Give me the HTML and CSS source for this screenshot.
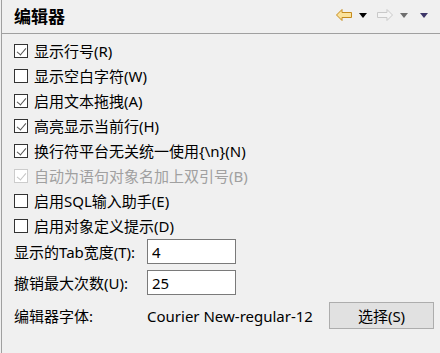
FILE: index.html
```html
<!DOCTYPE html>
<html lang="zh-CN">
<head>
  <meta charset="UTF-8" />
  <title>编辑器</title>
  <link rel="stylesheet" href="styles.css">
</head>
<body>
  <div class="panel">
    <div class="header">
      <h1>编辑器</h1>
      <div class="nav">
        <svg class="arrow" width="16" height="12" viewBox="0 0 16 12">
          <path d="M0.5 6 L6 0.5 L6 3.5 L15.5 3.5 L15.5 8.5 L6 8.5 L6 11.5 Z" fill="#fbe29a" stroke="#c48a1c" stroke-width="1"/>
        </svg>
        <span class="drop drop-black"></span>
        <svg class="arrow" width="16" height="12" viewBox="0 0 16 12">
          <path d="M15.5 6 L10 0.5 L10 3.5 L0.5 3.5 L0.5 8.5 L10 8.5 L10 11.5 Z" fill="#f4f4f4" stroke="#c9c9c9" stroke-width="1"/>
        </svg>
        <span class="drop drop-gray"></span>
        <span class="drop drop-menu"></span>
      </div>
    </div>

    <div class="options">
      <label class="row"><span class="box checked"></span>显示行号(R)</label>
      <label class="row"><span class="box"></span>显示空白字符(W)</label>
      <label class="row"><span class="box checked"></span>启用文本拖拽(A)</label>
      <label class="row"><span class="box checked"></span>高亮显示当前行(H)</label>
      <label class="row"><span class="box checked"></span>换行符平台无关统一使用{\n}(N)</label>
      <label class="row disabled"><span class="box checked"></span>自动为语句对象名加上双引号(B)</label>
      <label class="row"><span class="box"></span>启用SQL输入助手(E)</label>
      <label class="row"><span class="box"></span>启用对象定义提示(D)</label>
    </div>

    <div class="fields">
      <span class="field-label">显示的Tab宽度(T):</span>
      <input class="text" type="text" value="4">
      <span class="field-label">撤销最大次数(U):</span>
      <input class="text" type="text" value="25">
      <span class="field-label">编辑器字体:</span>
      <div class="font-row">
        <span class="font-name">Courier New-regular-12</span>
        <button class="btn">选择(S)</button>
      </div>
    </div>
  </div>
</body>
</html>
```

FILE: styles.css
```css
* {
  box-sizing: border-box;
  margin: 0;
  padding: 0;
}

body {
  background: #f0f0f0;
  font-family: "Noto Sans", "Noto Sans CJK SC", sans-serif;
  font-size: 15px;
  color: #000;
}

.panel {
  height: 353px;
  margin-left: 1px;
  border-left: 1px solid #a0a0a0;
}

.header {
  height: 34px;
  border-bottom: 1px solid #a0a0a0;
  display: flex;
  align-items: center;
  justify-content: space-between;
  padding: 0 12px 2px 12px;
}

h1 {
  font-size: 17px;
  font-weight: 700;
  font-family: "Noto Sans CJK SC", sans-serif;
}

.nav {
  display: flex;
  align-items: center;
  margin-top: -2px;
}

.arrow {
  display: block;
}

.drop {
  width: 0;
  height: 0;
  border-left: 4.5px solid transparent;
  border-right: 4.5px solid transparent;
  border-top: 5px solid #000;
  margin: 2px 10px 0 7px;
}

.drop-gray {
  border-top-color: #6e6e6e;
  margin-right: 12px;
}

.drop-menu {
  border-top-color: #3d3668;
  margin: 2px 0 0 0;
}

.options {
  display: flex;
  flex-direction: column;
  padding: 4px 0 0 12px;
}

.row {
  height: 25px;
  display: flex;
  align-items: center;
  gap: 6px;
}

.box {
  width: 14px;
  height: 14px;
  border: 1px solid #333;
  background: #fff;
  position: relative;
}

.box.checked::after {
  content: "";
  position: absolute;
  left: 4px;
  top: 1px;
  width: 4px;
  height: 8px;
  border-right: 1.2px solid #555;
  border-bottom: 1.2px solid #555;
  transform: rotate(40deg);
}

.row.disabled {
  color: #a0a0a0;
}

.row.disabled .box {
  border-color: #cccccc;
}

.row.disabled .box.checked::after {
  border-color: #c4c4c4;
}

.fields {
  display: grid;
  grid-template-columns: 133px 1fr;
  row-gap: 6px;
  align-items: center;
  padding: 1px 0 0 12px;
}

.text {
  width: 89px;
  height: 25px;
  border: 1px solid #7a7a7a;
  background: #fff;
  font: inherit;
  padding: 0 4px;
  outline: none;
}

.font-row {
  display: flex;
  align-items: center;
  margin-top: 1px;
}

.font-name {
  width: 182px;
}

.btn {
  width: 105px;
  height: 27px;
  background: #e1e1e1;
  border: 1px solid #adadad;
  font: inherit;
  color: #000;
}
```
